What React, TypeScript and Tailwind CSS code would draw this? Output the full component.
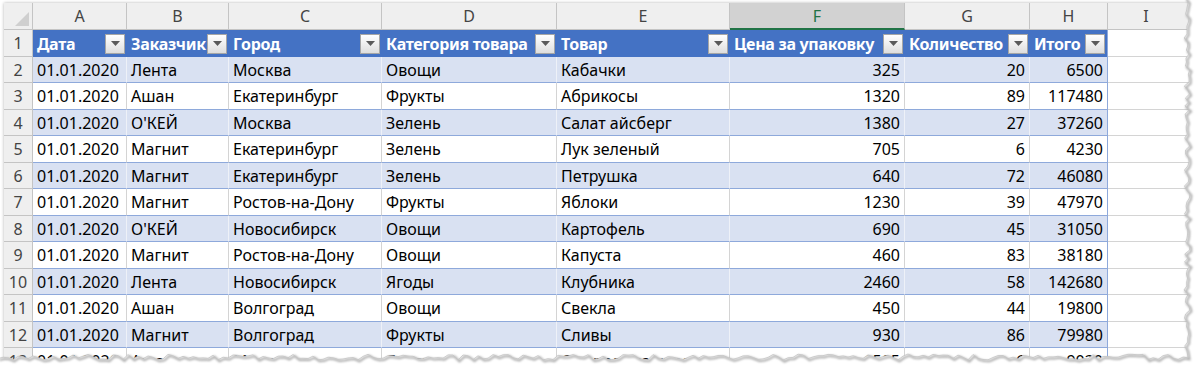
import { Fragment } from 'react';

type Col = { letter: string; w: string; title: string; num?: boolean };

const cols: Col[] = [
  { letter: 'A', w: 'w-[94px]', title: 'Дата' },
  { letter: 'B', w: 'w-[102px]', title: 'Заказчик' },
  { letter: 'C', w: 'w-[153px]', title: 'Город' },
  { letter: 'D', w: 'w-[175px]', title: 'Категория товара' },
  { letter: 'E', w: 'w-[173px]', title: 'Товар' },
  { letter: 'F', w: 'w-[175px]', title: 'Цена за упаковку', num: true },
  { letter: 'G', w: 'w-[125px]', title: 'Количество', num: true },
  { letter: 'H', w: 'w-[78px]', title: 'Итого', num: true },
];

const rows: string[][] = [
  ['01.01.2020', 'Лента', 'Москва', 'Овощи', 'Кабачки', '325', '20', '6500'],
  ['01.01.2020', 'Ашан', 'Екатеринбург', 'Фрукты', 'Абрикосы', '1320', '89', '117480'],
  ['01.01.2020', "О'КЕЙ", 'Москва', 'Зелень', 'Салат айсберг', '1380', '27', '37260'],
  ['01.01.2020', 'Магнит', 'Екатеринбург', 'Зелень', 'Лук зеленый', '705', '6', '4230'],
  ['01.01.2020', 'Магнит', 'Екатеринбург', 'Зелень', 'Петрушка', '640', '72', '46080'],
  ['01.01.2020', 'Магнит', 'Ростов-на-Дону', 'Фрукты', 'Яблоки', '1230', '39', '47970'],
  ['01.01.2020', "О'КЕЙ", 'Новосибирск', 'Овощи', 'Картофель', '690', '45', '31050'],
  ['01.01.2020', 'Магнит', 'Ростов-на-Дону', 'Овощи', 'Капуста', '460', '83', '38180'],
  ['01.01.2020', 'Лента', 'Новосибирск', 'Ягоды', 'Клубника', '2460', '58', '142680'],
  ['01.01.2020', 'Ашан', 'Волгоград', 'Овощи', 'Свекла', '450', '44', '19800'],
  ['01.01.2020', 'Магнит', 'Волгоград', 'Фрукты', 'Сливы', '930', '86', '79980'],
  ['01.01.2020', 'Ашан', 'Москва', 'Ягоды', 'Смородина красная', '1505', '6', '9030'],
];

const FilterButton = () => (
  <div className="flex h-[20px] w-[20px] shrink-0 items-center justify-center border border-[#a6a6a6] bg-gradient-to-b from-[#ffffff] to-[#dedede]">
    <svg width="9" height="5" viewBox="0 0 9 5">
      <path d="M0 0 L9 0 L4.5 5 Z" fill="#5a5a5a" />
    </svg>
  </div>
);

// jagged "torn paper" edge along the right and bottom of the sheet
const rnd = (i: number) => {
  const s = Math.sin(i * 12.9898 + 78.233) * 43758.5453;
  return s - Math.floor(s);
};

const TornEdge = () => {
  const pts: string[] = [];
  for (let y = -2, i = 0; y <= 356; y += 4, i++) {
    pts.push(`${(1187 + (rnd(i) - 0.5) * 6).toFixed(1)},${y}`);
  }
  for (let x = 1188, i = 200; x >= -2; x -= 5, i++) {
    pts.push(`${x},${(357 + (rnd(i) - 0.5) * 6).toFixed(1)}`);
  }
  const edge = pts.join(' ');
  return (
    <svg className="pointer-events-none absolute left-0 top-0" width="1200" height="371">
      <defs>
        <filter id="blur" x="-5%" y="-5%" width="110%" height="110%">
          <feGaussianBlur stdDeviation="1.3" />
        </filter>
      </defs>
      <polygon points={`1200,-2 ${edge} -2,371 1200,371`} fill="#ffffff" />
      <polyline points={edge} fill="none" stroke="#a8a8a8" strokeWidth="2" filter="url(#blur)" transform="translate(1.5,1.5)" />
      <polyline points={edge} fill="none" stroke="#c4c4c4" strokeWidth="0.8" />
    </svg>
  );
};

export default function App() {
  return (
    <div className="relative h-[371px] w-[1200px] overflow-hidden bg-white font-['Noto_Sans',sans-serif] text-[16px] leading-none text-black">
      <div className="ml-[4px] mt-[3px] flex flex-col shadow-[0_0_3px_rgba(0,0,0,0.3)]">
        {/* column letters */}
        <div className="flex h-[27px] bg-[#efefef]">
          <div className="relative w-[29px] shrink-0 border-b border-r border-[#c4c4c4]">
            <svg className="absolute bottom-[3px] right-[3px]" width="14" height="14" viewBox="0 0 14 14">
              <path d="M14 0 L14 14 L0 14 Z" fill="#cfcfcf" />
            </svg>
          </div>
          {cols.map((c) =>
            c.letter === 'F' ? (
              <div
                key={c.letter}
                className={`${c.w} flex shrink-0 items-center justify-center border-b-2 border-r border-b-[#217346] border-r-[#c4c4c4] bg-[#d2d2d2] text-[#217346]`}
              >
                {c.letter}
              </div>
            ) : (
              <div
                key={c.letter}
                className={`${c.w} flex shrink-0 items-center justify-center border-b border-r border-[#c4c4c4] text-[#444]`}
              >
                {c.letter}
              </div>
            ),
          )}
          <div className="flex w-[120px] shrink-0 items-center justify-center border-b border-[#c4c4c4] pr-[44px] text-[#444]">I</div>
        </div>

        {/* table header */}
        <div className="flex h-[27px]">
          <div className="flex w-[29px] shrink-0 items-center justify-center border-b border-r border-[#c4c4c4] bg-[#efefef] text-[#444]">1</div>
          {cols.map((c, i) => (
            <div
              key={c.letter}
              className={`${c.w} flex shrink-0 items-center justify-between bg-[#4472c4] pl-[4px] pr-[2px] font-bold text-white ${
                i === cols.length - 1 ? 'border-r border-[#8ea9db]' : ''
              }`}
            >
              <span className="whitespace-nowrap leading-normal tracking-[-0.3px]">{c.title}</span>
              <FilterButton />
            </div>
          ))}
          <div className="w-[120px] shrink-0 border-b border-[#d4d4d4] bg-white" />
        </div>

        {rows.map((r, ri) => {
          const band = ri % 2 === 0;
          return (
            <div key={ri} className={`flex ${ri % 2 === 0 ? 'h-[26px]' : 'h-[27px]'}`}>
              <div className="flex w-[29px] shrink-0 items-center justify-center border-b border-r border-[#c4c4c4] bg-[#efefef] text-[#444]">
                {ri + 2}
              </div>
              {cols.map((c, ci) => (
                <Fragment key={c.letter}>
                  <div
                    className={`${c.w} flex shrink-0 items-center border-b border-b-[#8ea9db] px-[4px] ${
                      c.num ? 'justify-end' : 'justify-start'
                    } ${band ? 'bg-[#d9e1f2]' : 'bg-white'} ${
                      ci === cols.length - 1
                        ? 'border-r border-r-[#8ea9db]'
                        : band
                          ? 'border-r border-r-[#eef1f8]'
                          : 'border-r border-r-[#d4d4d4]'
                    }`}
                  >
                    <span className="whitespace-nowrap leading-normal">{r[ci]}</span>
                  </div>
                </Fragment>
              ))}
              <div className="w-[120px] shrink-0 border-b border-[#d4d4d4] bg-white" />
            </div>
          );
        })}
      </div>
      <TornEdge />
    </div>
  );
}
